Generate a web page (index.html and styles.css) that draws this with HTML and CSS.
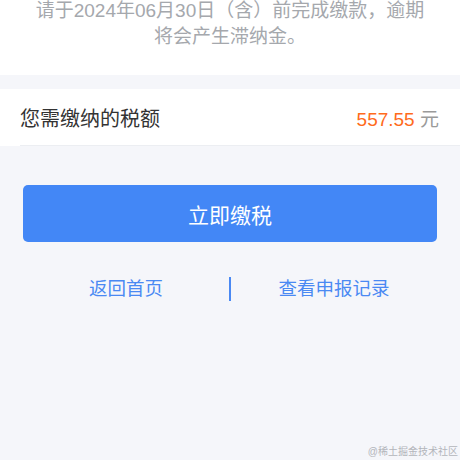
FILE: index.html
```html
<!DOCTYPE html>
<html lang="zh-CN">
<head>
<meta charset="utf-8">
<title>缴税</title>
<link rel="stylesheet" href="styles.css">
</head>
<body>
<section class="notice">
  <p class="notice-text">请于2024年06月30日（含）前完成缴款，逾期<br>将会产生滞纳金。</p>
</section>
<section class="amount-row">
  <div class="amount-inner">
    <span class="amount-label">您需缴纳的税额</span>
    <span class="amount-value"><span class="amount-num">557.55</span> <span class="amount-unit">元</span></span>
  </div>
</section>
<div class="pay-btn">立即缴税</div>
<nav class="links">
  <span class="link">返回首页</span>
  <span class="link-divider"></span>
  <span class="link">查看申报记录</span>
</nav>
<div class="watermark">@稀土掘金技术社区</div>
</body>
</html>
```
FILE: styles.css
```css
html, body {
  margin: 0;
  padding: 0;
}
body {
  width: 460px;
  height: 460px;
  overflow: hidden;
  position: relative;
  background: #f5f6fa;
  font-family: "Liberation Sans", "Noto Sans CJK SC", sans-serif;
}
.notice {
  background: #fff;
  padding: 0 20px 25px;
  text-align: center;
}
.notice-text {
  margin: -2px 0 0;
  font-size: 19px;
  line-height: 26px;
  color: #a5a8ad;
}
.amount-row {
  margin-top: 14px;
  background: #fff;
  padding-left: 20px;
}
.amount-inner {
  height: 56px;
  display: flex;
  align-items: center;
  justify-content: space-between;
  padding-right: 21px;
  border-bottom: 1px solid #eceef2;
}
.amount-label {
  font-size: 20px;
  color: #333;
}
.amount-value {
  font-size: 19px;
}
.amount-num {
  color: #ff6b1c;
}
.amount-unit {
  color: #9a9a9a;
  font-size: 19px;
}
.pay-btn {
  margin: 39px 23px 0;
  height: 57px;
  border-radius: 5px;
  background: #4387f6;
  color: #fff;
  font-size: 21px;
  display: flex;
  align-items: center;
  justify-content: center;
}
.links {
  margin-top: 35px;
  padding: 0 23px;
  display: flex;
  align-items: center;
  height: 24px;
}
.link {
  flex: 1;
  text-align: center;
  font-size: 18.5px;
  line-height: 24px;
  color: #4a89f3;
}
.link-divider {
  width: 2px;
  height: 24px;
  background: #4a89f3;
}
.watermark {
  position: absolute;
  right: 2px;
  bottom: 1px;
  font-size: 10px;
  line-height: 14px;
  color: #b3b5ba;
}
```
